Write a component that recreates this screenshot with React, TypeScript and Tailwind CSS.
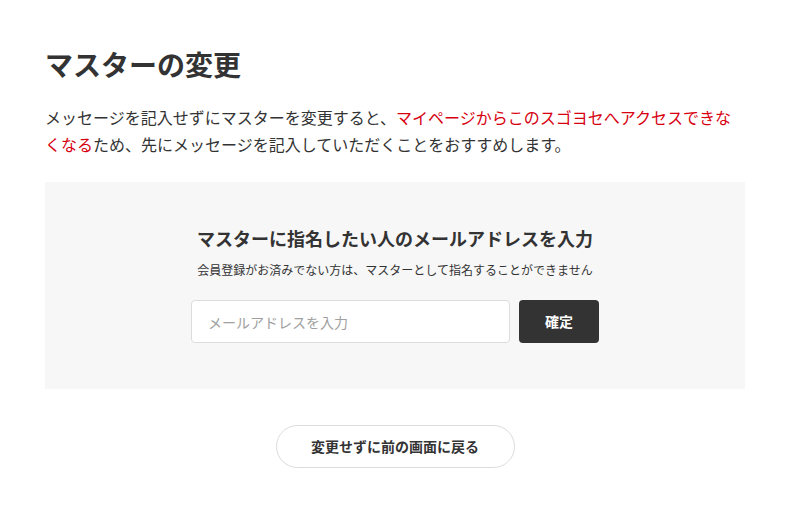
import React from "react";

export default function App() {
  return (
    <div
      className="min-h-[516px] bg-white text-[#333]"
      style={{ fontFamily: '"Noto Sans CJK JP", "Noto Sans", sans-serif' }}
    >
      <div className="ml-[45px] w-[700px] pt-[43px]">
        <h1 className="text-[28px] font-bold leading-[42px]">マスターの変更</h1>
        <p className="mt-[19px] text-[16px] leading-[27px]">
          メッセージを記入せずにマスターを変更すると、
          <span className="text-[#d7000f]">マイページからこのスゴヨセへアクセスできなくなる</span>
          ため、先にメッセージを記入していただくことをおすすめします。
        </p>
        <div className="mt-[24px] flex flex-col items-center bg-[#f7f7f7] pt-[43px] pb-[46px]">
          <h2 className="text-[18px] font-bold leading-[27px]">
            マスターに指名したい人のメールアドレスを入力
          </h2>
          <p className="mt-[9px] text-[12px] leading-[18px]">
            会員登録がお済みでない方は、マスターとして指名することができません
          </p>
          <div className="mt-[21px] flex gap-[9px]">
            <input
              type="text"
              placeholder="メールアドレスを入力"
              className="h-[43px] w-[319px] rounded-[4px] border border-[#dcdcdc] bg-white px-[16px] text-[14px] outline-none placeholder:text-[#a0a0a0]"
            />
            <button className="h-[43px] w-[80px] rounded-[4px] bg-[#333] text-[14px] font-bold text-white">
              確定
            </button>
          </div>
        </div>
        <div className="mt-[36px] flex justify-center">
          <button className="h-[43px] w-[239px] rounded-full border border-[#dcdcdc] bg-white text-[14px] font-bold text-[#333]">
            変更せずに前の画面に戻る
          </button>
        </div>
      </div>
    </div>
  );
}
